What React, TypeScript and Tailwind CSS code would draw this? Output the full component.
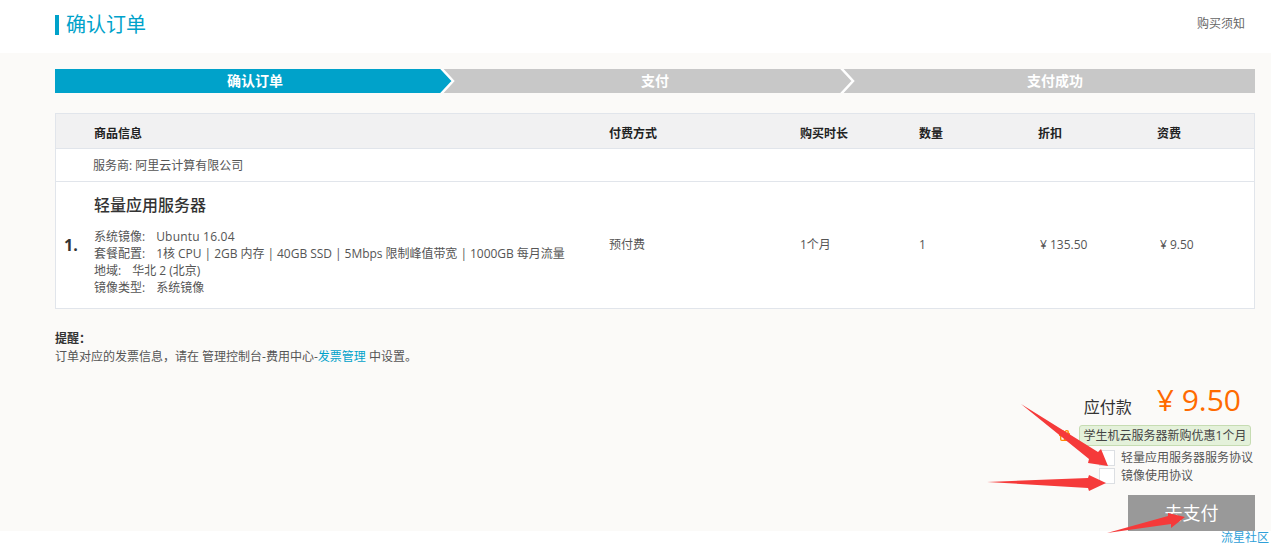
import React from 'react'
import { Gift } from 'lucide-react'

const font = '"Open Sans", "Noto Sans CJK SC", sans-serif'

const columns = 'grid grid-cols-[38px_515px_191px_119px_119px_119px_1fr]'

const Step = ({ label, active, last }: { label: string; active?: boolean; last?: boolean }) => (
  <div className={`relative flex h-6 flex-1 items-center justify-center text-sm font-bold text-white ${active ? 'bg-[#00a2ca]' : 'bg-[#c8c8c8]'}`}>
    {label}
    {!last && (
      <svg className="absolute top-0 right-0 z-10 h-6 w-[16px]" viewBox="0 0 16 24">
        <rect width="16" height="24" fill="#c8c8c8" />
        <path d="M0 0H2L14 12L2 24H0Z" fill={active ? '#00a2ca' : '#c8c8c8'} />
        <path d="M2 -1L14 12L2 25" fill="none" stroke="#ffffff" strokeWidth="2.5" />
      </svg>
    )}
  </div>
)

const Arrows = () => (
  <svg className="pointer-events-none absolute inset-0 z-20" width="1271" height="544" viewBox="0 0 1271 544">
    <polygon points="1021,404 1098,452 1101,449 1108,466 1088,463 1089,459" fill="#f53a3a" />
    <polygon points="987,482 1088,478 1089,475 1106,483 1089,491 1088,488" fill="#f53a3a" />
    <polygon points="1107,533 1168,516 1168,513 1185,517 1171,528 1171,524" fill="#f53a3a" />
  </svg>
)

export default function App() {
  return (
    <div className="relative h-[544px] w-full bg-white" style={{ fontFamily: font }}>
      <header className="flex h-[53px] items-start justify-between pr-[26px] pl-[55px]">
        <div className="mt-[15px] flex h-5 items-center border-l-4 border-[#00a2ca] pl-[7px] text-[20px] text-[#00a2ca]">
          确认订单
        </div>
        <a className="mt-[15px] text-xs leading-[18px] text-[#666]">购买须知</a>
      </header>

      <main className="h-[478px] overflow-hidden bg-[#fbfaf8] pt-4 pr-4 pl-[55px]">
        <div className="flex">
          <Step label="确认订单" active />
          <Step label="支付" />
          <Step label="支付成功" last />
        </div>

        <div className="mt-5 border border-[#e1e5eb] text-xs text-[#333]">
          <div className={`${columns} h-[35px] items-center border-b border-[#e1e5eb] bg-[#f1f1f2] pt-[6px] font-bold text-[#222]`}>
            <span />
            <span>商品信息</span>
            <span>付费方式</span>
            <span>购买时长</span>
            <span>数量</span>
            <span>折扣</span>
            <span>资费</span>
          </div>
          <div className="flex h-[33px] items-center border-b border-[#e1e5eb] bg-white pt-[2px] pl-[37px] text-[#555]">
            服务商: 阿里云计算有限公司
          </div>
          <div className={`${columns} h-[126px] items-center bg-white text-[#555]`}>
            <span className="pl-2 text-base font-bold text-[#333]">1.</span>
            <div className="pb-[2px]">
              <div className="mb-[11px] text-base leading-6 font-medium text-[#333]">轻量应用服务器</div>
              <div className="leading-[17px]">
                系统镜像:<span className="ml-[11px] tracking-[0.2px]">Ubuntu 16.04</span>
              </div>
              <div className="leading-[17px] whitespace-nowrap">
                套餐配置:
                <span className="ml-[11px] tracking-[-0.04px]">1核 CPU | 2GB 内存 | 40GB SSD | 5Mbps 限制峰值带宽 | 1000GB 每月流量</span>
              </div>
              <div className="leading-[17px]">
                地域:<span className="ml-[11px]">华北 2 (北京)</span>
              </div>
              <div className="leading-[17px]">
                镜像类型:<span className="ml-[11px]">系统镜像</span>
              </div>
            </div>
            <span>预付费</span>
            <span>1个月</span>
            <span>1</span>
            <span className="pl-[2px]">¥ 135.50</span>
            <span className="pl-[3px]">¥ 9.50</span>
          </div>
        </div>

        <div className="mt-[21px] text-xs leading-[17px] text-[#555]">
          <div className="font-bold text-[#333]">提醒：</div>
          <div className="mt-px">
            订单对应的发票信息，请在 管理控制台-费用中心-<a className="text-[#00a2ca]">发票管理</a> 中设置。
          </div>
        </div>

        <div className="mt-[15px] flex flex-col items-end">
          <div className="flex h-[40px] items-center pr-[14px]">
            <span className="mt-[14px] text-base text-[#333]">应付款</span>
            <span className="ml-[25px] text-[30px] leading-10 font-medium text-[#ff6a00]">¥ 9.50</span>
          </div>
          <div className="mt-[5px] flex items-center pr-[4px]">
            <Gift className="mr-[8px] text-[#ff8a00]" size={13} strokeWidth={2.5} />
            <span className="flex h-[21px] w-[172px] items-center justify-center rounded-[3px] border border-[#c6dcb2] bg-[#e4f1da] text-xs text-[#444]">
              学生机云服务器新购优惠1个月
            </span>
          </div>
          <label className="mt-[4px] flex h-4 w-[156px] items-center text-xs whitespace-nowrap text-[#555]">
            <span className="mr-[6px] h-4 w-4 shrink-0 border border-[#dcdfe3] bg-white" />
            轻量应用服务器服务协议
          </label>
          <label className="mt-[2px] flex h-4 w-[156px] items-center text-xs whitespace-nowrap text-[#555]">
            <span className="mr-[6px] h-4 w-4 shrink-0 border border-[#dcdfe3] bg-white" />
            镜像使用协议
          </label>
          <button className="mt-[11px] flex h-9 w-[127px] items-center justify-center bg-[#999] text-lg text-white">
            去支付
          </button>
        </div>
      </main>

      <div className="flex h-[13px] justify-end pr-[2px] text-xs leading-[13px] text-[#2f9fd8]">流星社区</div>
      <Arrows />
    </div>
  )
}
